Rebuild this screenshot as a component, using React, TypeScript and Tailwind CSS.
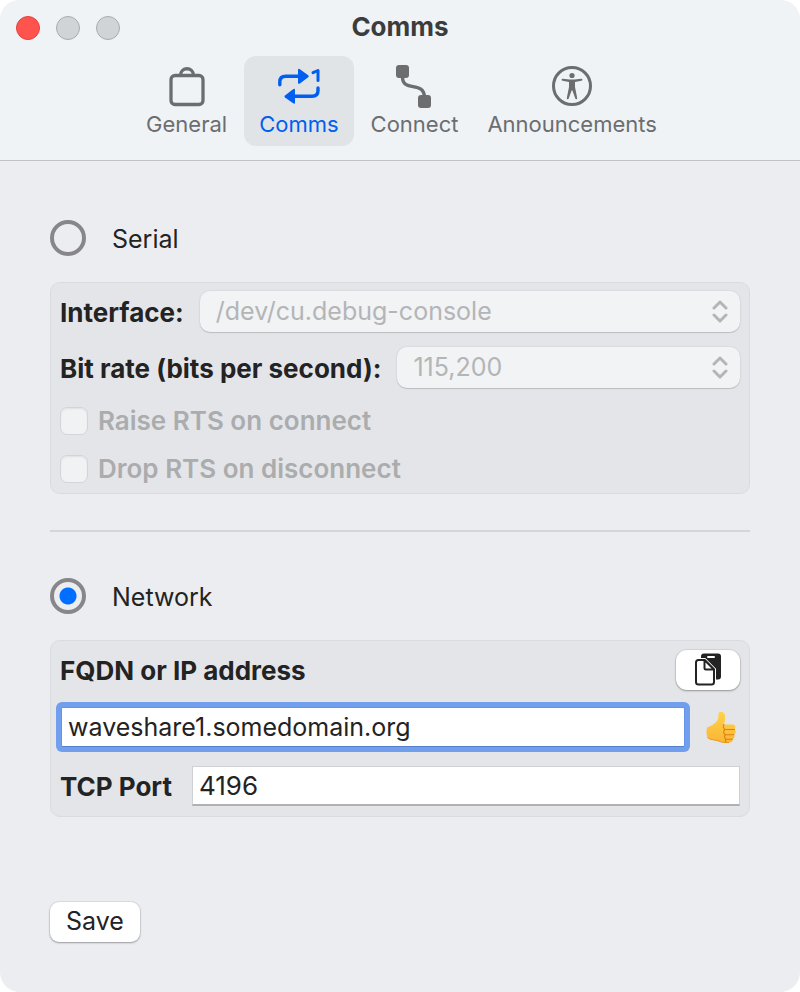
import { useState } from "react";
import type { ReactNode } from "react";

type TabId = "general" | "comms" | "connect" | "announcements";

type Tab = {
  id: TabId;
  label: string;
  icon: ReactNode;
};

const tabs: Tab[] = [
  { id: "general", label: "General", icon: <BagIcon /> },
  { id: "comms", label: "Comms", icon: <RepeatOneIcon /> },
  { id: "connect", label: "Connect", icon: <ConnectIcon /> },
  { id: "announcements", label: "Announcements", icon: <AccessibilityIcon /> },
];

export default function App() {
  const [activeTab, setActiveTab] = useState<TabId>("comms");
  const [mode, setMode] = useState("network");
  const [address, setAddress] = useState("waveshare1.somedomain.org");
  const [port, setPort] = useState("4196");

  const serialDisabled = mode !== "serial";

  return (
    <div className="flex min-h-screen flex-col overflow-hidden rounded-[20px] bg-[#ecedf1] font-['Inter',sans-serif] text-[25px] leading-[30px] text-[#232323]">
      <header className="border-b border-[#bfc1c4] bg-[#eff3f6] pb-3.5">
        <div className="grid h-14 grid-cols-[1fr_auto_1fr] items-center px-4">
          <div className="flex gap-4">
            <button
              type="button"
              aria-label="Close"
              className="size-6 rounded-full border border-[#e0443e] bg-[#ff544d]"
            />
            <button
              type="button"
              aria-label="Minimize"
              className="size-6 rounded-full border border-[#a9abad] bg-[#d1d4d6]"
            />
            <button
              type="button"
              aria-label="Zoom"
              className="size-6 rounded-full border border-[#a9abad] bg-[#d1d4d6]"
            />
          </div>
          <h1 className="pb-0.5 text-[26px] font-bold text-[#3b3c3d]">Comms</h1>
        </div>

        <nav className="flex justify-center gap-0.5">
          {tabs.map((tab) => (
            <TabButton
              key={tab.id}
              tab={tab}
              active={tab.id === activeTab}
              onSelect={() => setActiveTab(tab.id)}
            />
          ))}
        </nav>
      </header>

      <main className="px-[50px] pt-[59px] pb-[50px]">
        <ModeRadio
          label="Serial"
          checked={mode === "serial"}
          onSelect={() => setMode("serial")}
        />

        <section className="mt-[26px] rounded-[10px] border border-[#dadbde] bg-[#e4e5e9] px-[9px] pt-2 pb-2.5">
          <div className="flex flex-col gap-[15px]">
            <SelectRow
              id="interface"
              label="Interface:"
              value="/dev/cu.debug-console"
              disabled={serialDisabled}
            />
            <SelectRow
              id="bit-rate"
              label="Bit rate (bits per second):"
              value="115,200"
              disabled={serialDisabled}
            />
          </div>

          <div className="mt-[19px] flex flex-col gap-5">
            <CheckRow label="Raise RTS on connect" disabled={serialDisabled} />
            <CheckRow
              label="Drop RTS on disconnect"
              disabled={serialDisabled}
            />
          </div>
        </section>

        <hr className="mt-9 mb-[46px] border-t-2 border-[#d5d6d9]" />

        <ModeRadio
          label="Network"
          checked={mode === "network"}
          onSelect={() => setMode("network")}
        />

        <section className="mt-[26px] rounded-[10px] border border-[#dadbde] bg-[#e4e5e9] px-[9px] pt-[9px] pb-2.5">
          <div className="flex items-center justify-between">
            <label htmlFor="address" className="pt-0.5 text-[26px] font-bold">
              FQDN or IP address
            </label>
            <button
              type="button"
              aria-label="Paste address"
              className="flex h-10 w-16 items-center justify-center rounded-[11px] bg-white shadow-[0_0_1px_1px_rgba(0,0,0,0.07),0_1px_2px_rgba(0,0,0,0.3)]"
            >
              <PasteIcon />
            </button>
          </div>

          <div className="mt-[17px] flex items-center gap-[21px] pr-1 pl-px">
            <input
              id="address"
              type="text"
              value={address}
              onChange={(event) => setAddress(event.target.value)}
              className="h-10 min-w-0 flex-1 rounded-[2px] border border-[#6494e8] border-b-[#5580cc] bg-white px-1.5 ring-[5px] ring-[#729fed] outline-none"
            />
            <ThumbsUpIcon />
          </div>

          <div className="mt-[19px] flex items-center gap-5">
            <label htmlFor="port" className="pt-0.5 text-[26px] font-bold">
              TCP Port
            </label>
            <input
              id="port"
              type="text"
              value={port}
              onChange={(event) => setPort(event.target.value)}
              className="h-10 min-w-0 flex-1 border border-[#d0d1d3] border-b-2 border-b-[#b0b1b3] bg-white px-1.5 text-[26px] outline-none"
            />
          </div>
        </section>

        <button
          type="button"
          className="mt-[85px] h-10 rounded-[9px] bg-white px-4 pb-0.5 shadow-[0_0_1px_1px_rgba(0,0,0,0.07),0_1px_2px_rgba(0,0,0,0.3)]"
        >
          Save
        </button>
      </main>
    </div>
  );
}

type TabButtonProps = {
  tab: Tab;
  active: boolean;
  onSelect: () => void;
};

function TabButton({ tab, active, onSelect }: TabButtonProps) {
  return (
    <button
      type="button"
      aria-pressed={active}
      onClick={onSelect}
      className={`flex h-[90px] flex-col items-center rounded-xl px-[15px] pt-1.5 text-[22px] leading-7 last:px-3 ${
        active ? "bg-[#e0e4e6] text-[#005ff0]" : "text-[#6c6d6f]"
      }`}
    >
      {tab.icon}
      {tab.label}
    </button>
  );
}

type ModeRadioProps = {
  label: string;
  checked: boolean;
  onSelect: () => void;
};

function ModeRadio({ label, checked, onSelect }: ModeRadioProps) {
  return (
    <label className="flex h-9 w-fit items-center gap-[26px]">
      <input
        type="radio"
        name="mode"
        checked={checked}
        onChange={onSelect}
        className="size-9 appearance-none rounded-full border-4 border-[#87878b] checked:bg-[radial-gradient(circle,#006fff_8px,transparent_9px)]"
      />
      <span className="pt-0.5">{label}</span>
    </label>
  );
}

type SelectRowProps = {
  id: string;
  label: string;
  value: string;
  disabled: boolean;
};

function SelectRow({ id, label, value, disabled }: SelectRowProps) {
  return (
    <div className="flex items-center gap-4">
      <label htmlFor={id} className="pt-0.5 text-[26px] font-bold">
        {label}
      </label>
      <div className="relative min-w-0 flex-1">
        <select
          id={id}
          defaultValue={value}
          disabled={disabled}
          className="block h-[41px] w-full appearance-none rounded-[10px] bg-[#f1f3f5] px-4 pb-0.5 opacity-100 shadow-[0_0_1px_1px_rgba(0,0,0,0.04),0_1px_1px_rgba(0,0,0,0.15)] disabled:text-[#b4b5b7]"
        >
          <option>{value}</option>
        </select>
        <svg
          viewBox="0 0 16 24"
          className="pointer-events-none absolute top-2 right-3 h-6 w-4 fill-none stroke-[#b4b5b7] stroke-3"
          strokeLinecap="round"
          strokeLinejoin="round"
        >
          <path d="M2 9 8 3 14 9M2 16 8 22 14 16" />
        </svg>
      </div>
    </div>
  );
}

type CheckRowProps = {
  label: string;
  disabled: boolean;
};

function CheckRow({ label, disabled }: CheckRowProps) {
  return (
    <label
      className={`flex h-7 w-fit items-center gap-2.5 text-[26px] font-semibold ${
        disabled ? "text-[#abacae]" : ""
      }`}
    >
      <input
        type="checkbox"
        disabled={disabled}
        className="size-7 appearance-none rounded-[7px] border border-[#d4d5d8] bg-[#f1f2f4] shadow-[inset_0_1px_2px_rgba(0,0,0,0.07)] checked:bg-[#006fff]"
      />
      {label}
    </label>
  );
}

function BagIcon() {
  return (
    <svg
      viewBox="0 0 48 48"
      className="size-12 fill-none stroke-current"
      strokeWidth="3.3"
    >
      <rect x="8" y="13.500" width="32" height="29" rx="4" />
      <path d="M17.500 13.500C17.500 4.500 30.500 4.500 30.500 13.500" />
    </svg>
  );
}

function RepeatOneIcon() {
  return (
    <svg viewBox="0 0 48 48" className="size-12 fill-current">
      <g
        className="fill-none stroke-current"
        strokeWidth="3.4"
        strokeLinecap="round"
        strokeLinejoin="round"
      >
        <path d="M4.800 22.800V20q0-5.700 6-5.700H24" />
        <path d="M43 26v2.500q0 5.800-6 5.800H18" />
        <path d="M38 10.700 43 8.500V18.500" strokeWidth="3" />
      </g>
      <path d="M23 8.300q0-2.300 1.900-1l8.300 6q1.300 1 0 2l-8.300 6.300q-1.900 1.200-1.900-1z" />
      <path d="M20 28.200q0-2.200-1.900-.9L10 33.400q-1.300 1 0 2l8.100 5.900q1.900 1.300 1.900-.9z" />
    </svg>
  );
}

function ConnectIcon() {
  return (
    <svg viewBox="0 0 48 48" className="size-12 fill-current">
      <path
        d="M12.500 15C12.500 31 34.500 18 34.500 36"
        className="fill-none stroke-current"
        strokeWidth="3.4"
      />
      <rect x="6" y="3" width="13" height="13" rx="3" />
      <rect x="28" y="33" width="13" height="13" rx="3" />
    </svg>
  );
}

function AccessibilityIcon() {
  return (
    <svg viewBox="0 0 48 48" className="size-12 fill-current">
      <circle
        cx="24"
        cy="24"
        r="18.500"
        className="fill-none stroke-current stroke-3"
      />
      <circle cx="24" cy="13.500" r="2.600" />
      <path d="M14.800 16.700 21.500 17.600H26.500L33.200 16.700A1 1 0 0 1 33.500 18.800L27 19.900V25L29.200 36A.9.9 0 0 1 27.300 36.500L24.400 28.500H23.600L20.700 36.500A.9.9 0 0 1 18.800 36L21 25V19.900L14.500 18.800A1 1 0 0 1 14.800 16.700Z" />
    </svg>
  );
}

function PasteIcon() {
  return (
    <svg viewBox="0 0 28 34" className="h-[34px] w-7">
      <rect x="7" y="0.500" width="20" height="26" rx="3" className="fill-[#232323]" />
      <path d="M14 4h6" className="stroke-white stroke-2" strokeLinecap="round" />
      <path
        d="M4.500 7H10.500L20 16.500V29Q20 31.500 17.500 31.500H4.500Q2 31.500 2 29V9.500Q2 7 4.500 7Z"
        className="fill-white stroke-white stroke-4"
      />
      <path
        d="M4.500 7H10.500L20 16.500V29Q20 31.500 17.500 31.500H4.500Q2 31.500 2 29V9.500Q2 7 4.500 7Z"
        className="fill-white stroke-[#232323] stroke-2"
      />
      <path
        d="M10.500 7V15Q10.500 16.500 12 16.500H20Z"
        className="fill-white stroke-[#232323] stroke-2"
        strokeLinejoin="round"
      />
    </svg>
  );
}

function ThumbsUpIcon() {
  return (
    <svg
      viewBox="0 0 30 32"
      role="img"
      aria-label="Address is valid"
      className="h-8 w-[30px]"
    >
      <defs>
        <linearGradient id="thumb" x1="0" y1="0" x2="0" y2="1">
          <stop offset="0" stopColor="#ffd24a" />
          <stop offset="1" stopColor="#fbb634" />
        </linearGradient>
      </defs>
      <path
        d="M1 16.500C4 15.500 8 13.500 10.500 10.500C12.500 8 12.500 6 12.500 3C12.500 0 17 0 18.500 3C20 6.500 18.500 10.500 18 13.500H26.500C29.500 13.500 30 17 28.500 18.500C30.300 19.800 30 22.500 28 23.700C29 25.500 28.500 27.500 26.500 28.200C27 30.500 25.500 31.500 23 31.500C17 31.800 15 31 12 29.800C8 28.500 4 29 1.500 26.500C.3 23.500.3 19.500 1 16.500Z"
        fill="url(#thumb)"
      />
      <path
        d="M18 13.500C16.800 15 17.200 17.500 19 18.500H28.500M19 18.500C17 20 17.500 23 19.500 23.700H28M19.500 23.700C18 25 18.500 27.500 20 28.200H26.500M20 28.200C19 29.500 19.500 31 20.500 31.500"
        fill="none"
        stroke="#d98212"
        strokeWidth="1.1"
        strokeLinecap="round"
      />
      <path
        d="M1.500 26.500C4 29 8 28.500 12 29.800C15 31 17 31.800 23 31.500"
        fill="none"
        stroke="#e8961c"
      />
    </svg>
  );
}
